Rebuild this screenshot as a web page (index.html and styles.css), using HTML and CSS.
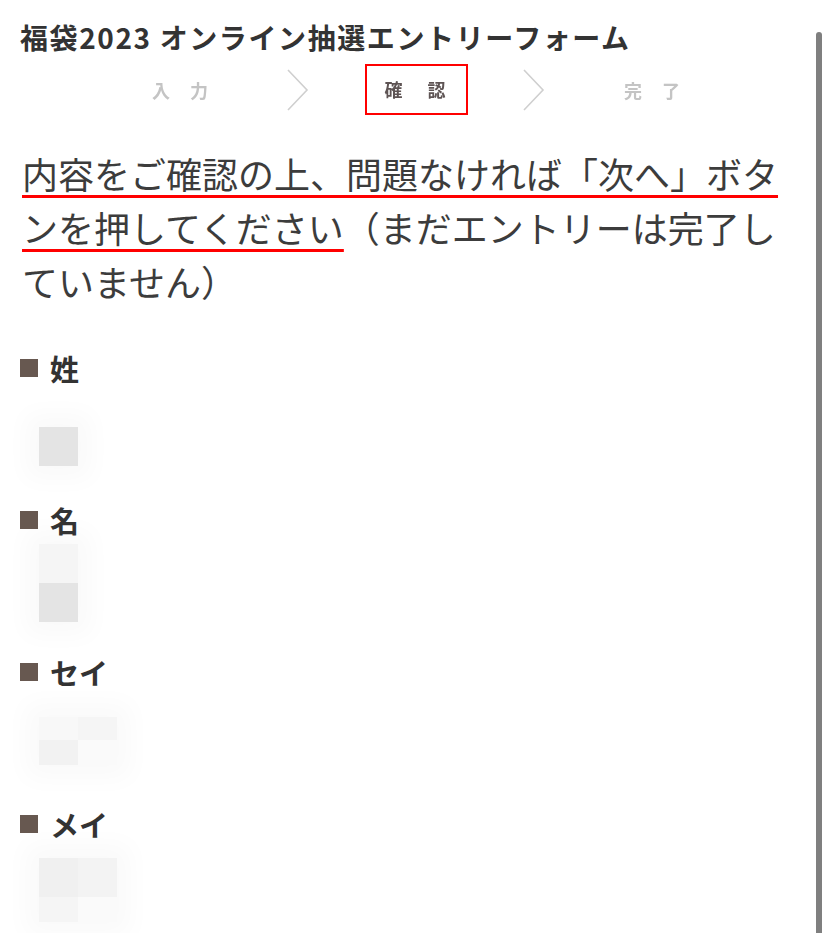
FILE: index.html
```html
<!DOCTYPE html>
<html lang="ja">
<head>
  <meta charset="utf-8">
  <title>福袋2023 オンライン抽選エントリーフォーム - 確認</title>
  <link rel="stylesheet" href="styles.css">
</head>
<body>
  <div class="page">
    <h1 class="title">福袋2023 オンライン抽選エントリーフォーム</h1>

    <div class="steps">
      <div class="step step-off">入力</div>
      <div class="step-arrow">
        <svg width="22" height="42" viewBox="0 0 22 42"><polyline points="1,1 20,21 1,41" fill="none" stroke="#cfcfcf" stroke-width="1.6"/></svg>
      </div>
      <div class="step step-on"><span class="step-box">確認</span></div>
      <div class="step-arrow">
        <svg width="22" height="42" viewBox="0 0 22 42"><polyline points="1,1 20,21 1,41" fill="none" stroke="#cfcfcf" stroke-width="1.6"/></svg>
      </div>
      <div class="step step-off">完了</div>
    </div>

    <p class="lead"><span class="mark">内容をご確認の上、問題なければ「次へ」ボタンを押してください</span>（まだエントリーは完了していません）</p>

    <div class="field">
      <div class="label">姓</div>
      <div class="value">
        <div class="mosaic mosaic-1">
          <span class="cell c-e4"></span>
        </div>
      </div>
    </div>

    <div class="field">
      <div class="label">名</div>
      <div class="value">
        <div class="mosaic mosaic-2">
          <span class="cell c-f5"></span>
          <span class="cell c-e4"></span>
        </div>
      </div>
    </div>

    <div class="field">
      <div class="label">セイ</div>
      <div class="value">
        <div class="mosaic mosaic-3 cols-2">
          <span class="cell c-f8 thin"></span>
          <span class="cell c-f5 thin"></span>
          <span class="cell c-f2 short"></span>
          <span class="cell c-fa short"></span>
        </div>
      </div>
    </div>

    <div class="field">
      <div class="label">メイ</div>
      <div class="value">
        <div class="mosaic mosaic-4 cols-2">
          <span class="cell c-f0"></span>
          <span class="cell c-f3"></span>
          <span class="cell c-f5 short"></span>
          <span class="cell c-fa short"></span>
        </div>
      </div>
    </div>
  </div>

  <div class="scrollbar"></div>
</body>
</html>
```

FILE: styles.css
```css
body { margin: 0; background: #fff; color: #333; font-family: "Noto Sans CJK JP", "Noto Sans", sans-serif; overflow: hidden; }
.page { height: 933px; box-sizing: border-box; overflow: hidden; padding: 20px 40px 0 20px; }

.title { margin: 0; font-size: 28px; line-height: 34px; font-weight: bold; letter-spacing: 1.6px; color: #333; }

.steps { display: grid; grid-template-columns: repeat(5, 118px); align-items: center; height: 55px; margin: 8px 0 0 101px; }
.step { text-align: center; white-space: nowrap; font-size: 18px; font-weight: bold; letter-spacing: 20px; text-indent: 20px; filter: blur(0.6px); }
.step-off { color: #c4c4c4; }
.step-on { color: #5e5454; letter-spacing: 0; text-indent: 0; filter: none; }
.step-box { display: inline-block; width: 99px; height: 47px; line-height: 47px; border: 2px solid #f00; letter-spacing: 25px; text-indent: 18px; filter: blur(0.5px); }
.step-arrow { display: flex; justify-content: center; }

.lead { margin: 29px 0 0 2px; width: 770px; font-size: 36px; line-height: 54px; color: #3c3c3c; }
.mark { text-decoration: underline; text-decoration-color: #f00; text-decoration-thickness: 3px; text-underline-offset: 6px; }

.field { height: 152px; }
.lead + .field { margin-top: 40px; }
.label { position: relative; padding-left: 30px; font-size: 29px; line-height: 40px; font-weight: bold; color: #333; }
.label::before { content: ""; position: absolute; left: 0; top: 11px; width: 18px; height: 18px; background: #675850; }
.value { padding-left: 19px; }

.mosaic { display: grid; grid-template-columns: 39px; box-shadow: 0 0 24px 14px #fafafa; width: 39px; background: #fafafa; }
.mosaic.cols-2 { grid-template-columns: 39px 39px; width: 78px; }
.mosaic-1 { margin-top: 39px; }
.mosaic-2 { margin-top: 4px; }
.mosaic-3 { margin-top: 25px; }
.mosaic-4 { margin-top: 14px; }
.cell { display: block; height: 39px; }
.cell.thin { height: 23px; }
.cell.short { height: 25px; }
.c-e4 { background: #e4e4e4; }
.c-f0 { background: #f0f0f0; }
.c-f2 { background: #f2f2f2; }
.c-f3 { background: #f3f3f3; }
.c-f5 { background: #f5f5f5; }
.c-f8 { background: #f8f8f8; }
.c-fa { background: #fafafa; }

.scrollbar { position: fixed; top: 32px; right: 3px; bottom: 0; width: 6px; background: #7f7f7f; border-radius: 3px 3px 0 0; }
```
